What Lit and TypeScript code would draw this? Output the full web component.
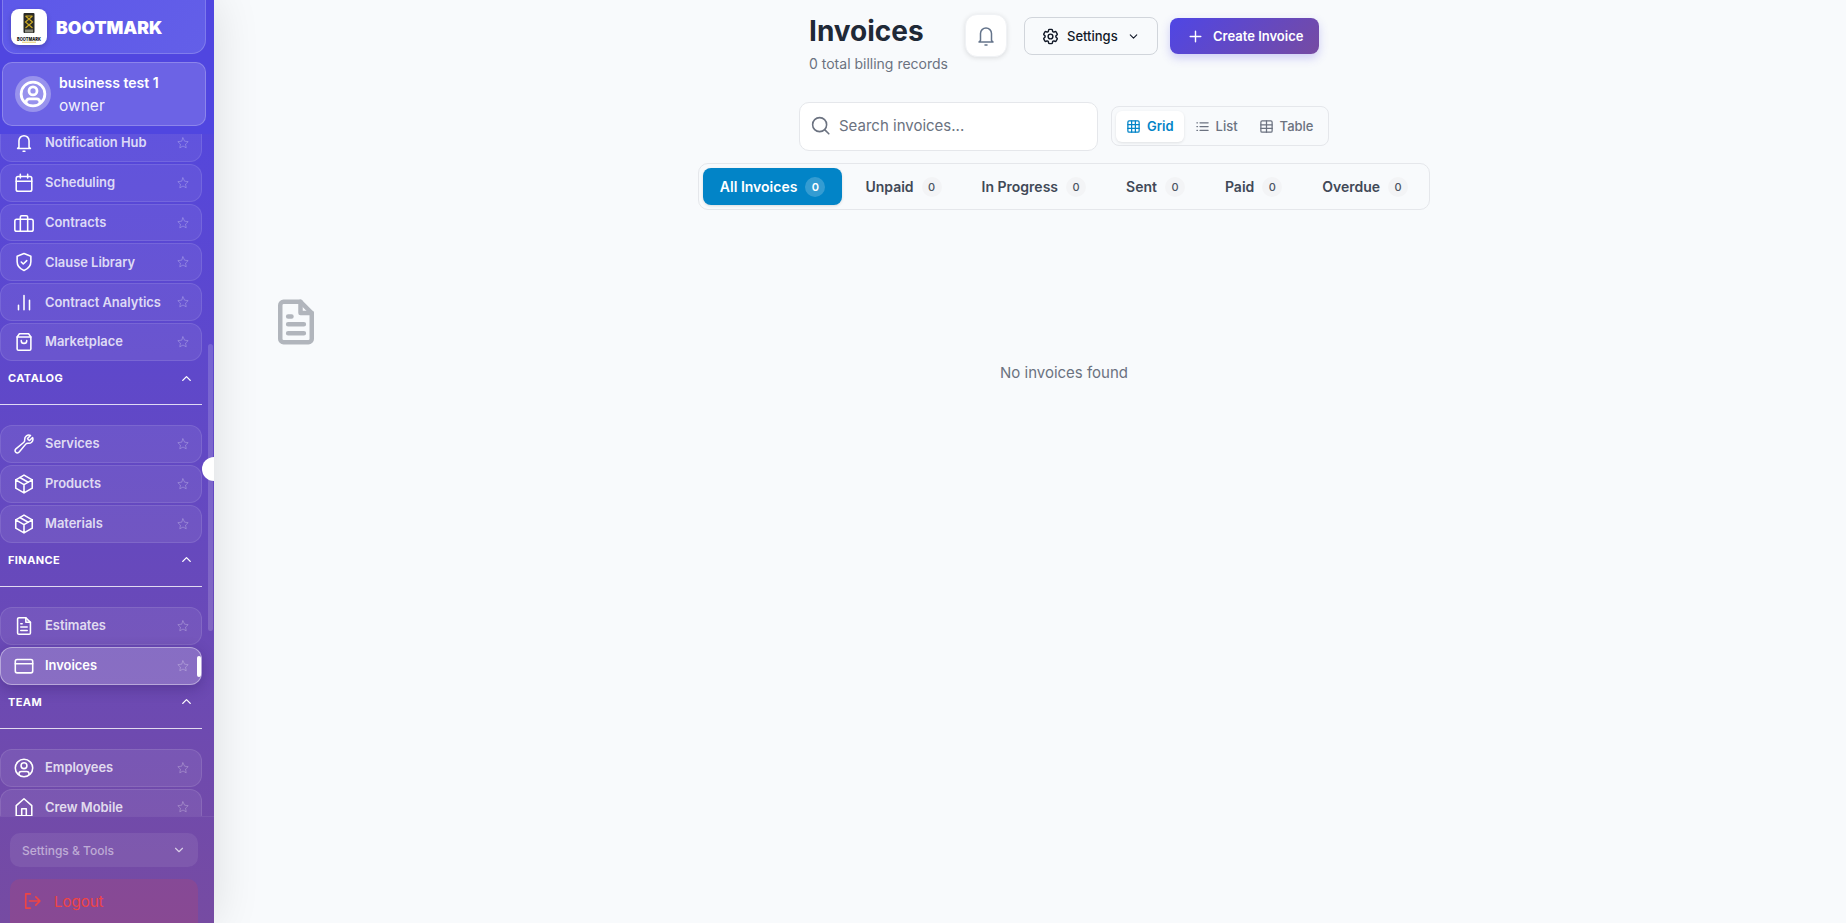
import { LitElement, html, css, svg } from 'lit';
import { customElement } from 'lit/decorators.js';
import { classMap } from 'lit/directives/class-map.js';

const icons: Record<string, unknown> = {
    bell: svg`<path d="M6.500 16.500V9.500a5.500 5.500 0 0 1 11 0v7l1.500 1.500H5z"/><path d="M11 21h2"/>`,
    calendar: svg`<rect x="3.500" y="5" width="17" height="16" rx="2"/><path d="M8 2.500v4M16 2.500v4M3.500 10h17"/>`,
    briefcase: svg`<rect x="2" y="8" width="20" height="13" rx="2"/><path d="M8 21V5.500A1.500 1.500 0 0 1 9.500 4h5A1.500 1.500 0 0 1 16 5.500V21"/>`,
    shield: svg`<path d="M12 2.800l7.500 2.900v5.800c0 4.600-3 8-7.500 9.700-4.500-1.700-7.500-5.100-7.500-9.700V5.700z"/><path d="M9 12l2.200 2.200L15 10.500"/>`,
    chart: svg`<path d="M6 20.500v-5M12 20.500V5M18 20.500V10"/>`,
    bag: svg`<path d="M7 3h10l2.500 3.500V19.500a1.500 1.500 0 0 1-1.500 1.500H6a1.500 1.500 0 0 1-1.500-1.500V6.500z"/><path d="M4.500 6.500h15M9 10.500a3 3 0 0 0 6 0"/>`,
    wrench: svg`<path d="M21.750 6.750a4.500 4.500 0 0 1-4.884 4.484c-1.076-.091-2.264.071-2.950.904l-7.152 8.684a2.548 2.548 0 1 1-3.586-3.586l8.684-7.152c.833-.686.995-1.874.904-2.950a4.500 4.500 0 0 1 6.336-4.486l-3.276 3.276a3.004 3.004 0 0 0 2.250 2.250l3.276-3.276c.201.422.398.896.398 1.856z"/>`,
    cube: svg`<path d="M21 7.500l-9-5.250L3 7.500m18 0l-9 5.250m9-5.250v9l-9 5.250M3 7.500l9 5.250M3 7.500v9l9 5.250m0-9v9"/><path d="M7.500 4.900l9 5.200"/>`,
    doc: svg`<path d="M14 3H6.500A1.500 1.500 0 0 0 5 4.500v15A1.500 1.500 0 0 0 6.500 21h11a1.500 1.500 0 0 0 1.500-1.500V8z"/><path d="M14 3v5h5M8.500 13h7M8.500 17h7M8.500 9.500H10"/>`,
    card: svg`<rect x="2.500" y="5" width="19" height="14.500" rx="2"/><path d="M2.500 9.500h19"/>`,
    user: svg`<circle cx="12" cy="12" r="9.500"/><circle cx="12" cy="9.500" r="3.200"/><path d="M6.500 19v-.7a2.500 2.500 0 0 1 2.500-2.500h6a2.500 2.500 0 0 1 2.500 2.500v.7"/>`,
    home: svg`<path d="M3.500 21.500V10.500L12 3l8.500 7.500v11z"/><path d="M9.500 21.500V14h5v7.500"/>`,
    chevUp: svg`<path d="M6 15l6-6 6 6"/>`,
    chevDown: svg`<path d="M6 9l6 6 6-6"/>`,
    star: svg`<path d="M12 3.200l2.700 5.700 6.200.8-4.500 4.300 1.100 6.200L12 17.200l-5.500 3 1.100-6.200-4.500-4.300 6.200-.8z"/>`,
    logout: svg`<path d="M10 3.500H4.500v17H10"/><path d="M9 12h12.500M16.500 7l5 5-5 5"/>`,
    gear: svg`<path d="M9.594 3.940c.09-.542.56-.94 1.110-.94h2.593c.55 0 1.020.398 1.110.94l.213 1.281c.063.374.313.686.645.870.074.040.147.083.22.127.325.196.72.257 1.075.124l1.217-.456a1.125 1.125 0 0 1 1.370.490l1.296 2.247a1.125 1.125 0 0 1-.26 1.431l-1.003.827c-.293.241-.438.613-.43.992a7.723 7.723 0 0 1 0 .255c-.008.378.137.75.43.991l1.004.827c.424.35.534.955.26 1.430l-1.298 2.247a1.125 1.125 0 0 1-1.369.491l-1.217-.456c-.355-.133-.75-.072-1.076.124a6.470 6.470 0 0 1-.22.128c-.331.183-.581.495-.644.869l-.213 1.281c-.09.543-.56.94-1.110.94h-2.594c-.55 0-1.019-.398-1.110-.94l-.213-1.281c-.062-.374-.312-.686-.644-.870a6.520 6.520 0 0 1-.22-.127c-.325-.196-.72-.257-1.076-.124l-1.217.456a1.125 1.125 0 0 1-1.369-.490l-1.297-2.247a1.125 1.125 0 0 1 .26-1.431l1.004-.827c.292-.24.437-.613.43-.991a6.932 6.932 0 0 1 0-.255c.007-.38-.138-.751-.43-.992l-1.004-.827a1.125 1.125 0 0 1-.26-1.430l1.297-2.247a1.125 1.125 0 0 1 1.370-.491l1.216.456c.356.133.751.072 1.076-.124.072-.044.146-.086.22-.128.332-.183.582-.495.644-.869l.214-1.280z"/><circle cx="12" cy="12" r="3"/>`,
    plus: svg`<path d="M12 4.500v15M4.500 12h15"/>`,
    search: svg`<circle cx="11" cy="11" r="8"/><path d="M17 17l4.500 4.500"/>`,
    grid: svg`<rect x="3" y="3" width="18" height="18" rx="2"/><path d="M3 9h18M3 15h18M9 3v18M15 3v18"/>`,
    list: svg`<path d="M8 6h13M8 12h13M8 18h13M3 6h1M3 12h1M3 18h1"/>`,
    table: svg`<rect x="3" y="3" width="18" height="18" rx="2"/><path d="M3 9.500h18M3 15h18M12 3v18"/>`,
};

const icon = (name: string, cls = '') =>
    html`<svg class="icon ${cls}" viewBox="0 0 24 24" fill="none" stroke="currentColor"
        stroke-width="2" stroke-linecap="round" stroke-linejoin="round">${icons[name]}</svg>`;

const sections = [
    { title: '', items: [
        ['Notification Hub', 'bell'], ['Scheduling', 'calendar'], ['Contracts', 'briefcase'],
        ['Clause Library', 'shield'], ['Contract Analytics', 'chart'], ['Marketplace', 'bag'],
    ] },
    { title: 'CATALOG', items: [['Services', 'wrench'], ['Products', 'cube'], ['Materials', 'cube']] },
    { title: 'FINANCE', items: [['Estimates', 'doc'], ['Invoices', 'card']] },
    { title: 'TEAM', items: [['Employees', 'user'], ['Crew Mobile', 'home']] },
];

const tabs = [
    ['All Invoices', 0], ['Unpaid', 0], ['In Progress', 0], ['Sent', 0], ['Paid', 0], ['Overdue', 0],
];

@customElement('app-root')
export class AppRoot extends LitElement {
    static styles = css`
        :host {
            display: flex;
            height: 923px;
            overflow: hidden;
            background: #f8fafc;
            font-family: Inter, 'Liberation Sans', sans-serif;
            color: #111827;
        }

        .icon { display: block; flex: none; }

        /* sidebar */
        .sidebar {
            position: relative;
            z-index: 1;
            flex: none;
            width: 214px;
            height: 923px;
            display: flex;
            flex-direction: column;
            background: linear-gradient(180deg, #4f46e5 0%, #764ba2 100%);
            box-shadow: 0 0 44px rgba(0, 0, 0, 0.12);
            color: #fff;
        }

        .side-head {
            flex: none;
            height: 134px;
            box-sizing: border-box;
            padding: 0 8px 0 2px;
            background: #5046e0;
            position: relative;
            z-index: 1;
        }

        .brand {
            height: 54px;
            box-sizing: border-box;
            display: flex;
            align-items: center;
            gap: 9px;
            padding-left: 8px;
            border: 1px solid rgba(255, 255, 255, 0.2);
            border-top: none;
            border-radius: 0 0 14px 14px;
            background: linear-gradient(135deg, #5d58e9, #635fe8);
        }

        .logo {
            width: 36px;
            height: 36px;
            border-radius: 8px;
            background: #fff;
            box-shadow: 0 2px 5px rgba(0, 0, 0, 0.2);
            flex: none;
        }

        .brand-name { margin-top: 1px; font-size: 17.600px; font-weight: 900; }

        .profile {
            margin-top: 8px;
            height: 64px;
            box-sizing: border-box;
            display: flex;
            align-items: center;
            gap: 8px;
            padding-left: 12px;
            border: 1px solid rgba(255, 255, 255, 0.22);
            border-radius: 10px;
            background: rgba(255, 255, 255, 0.16);
        }

        .avatar {
            width: 36px;
            height: 36px;
            border-radius: 50%;
            box-sizing: border-box;
            padding: 3px;
            background: rgba(255, 255, 255, 0.3);
            flex: none;
        }

        .avatar .icon { width: 30px; height: 30px; stroke-width: 2.200; }

        .profile-name { font-size: 14px; font-weight: 600; line-height: 22px; }
        .profile-role { font-size: 15.500px; font-weight: 400; line-height: 23px; color: rgba(255, 255, 255, 0.92); }

        .nav {
            position: relative;
            flex: 1;
            min-height: 0;
            overflow: hidden;
            padding-right: 12px;
        }

        .nav-list { margin-top: -10.200px; }

        .row {
            position: relative;
            height: 37.900px;
            box-sizing: border-box;
            margin-bottom: 2px;
            display: flex;
            align-items: center;
            padding-left: 12px;
            border: 1px solid rgba(255, 255, 255, 0.1);
            border-radius: 12px;
            background: rgba(255, 255, 255, 0.075);
            color: rgba(255, 255, 255, 0.8);
            font-size: 12.900px;
            font-weight: 600;
        }

        .row > .icon:first-child { width: 22px; height: 22px; color: #fff; stroke-width: 1.700; }
        .row-label { margin-left: 10px; flex: 1; position: relative; top: -0.300px; }
        .row .star { width: 14px; height: 14px; margin-right: 11px; stroke-width: 1.500; color: rgba(255, 255, 255, 0.28); }

        .row.active {
            background: rgba(255, 255, 255, 0.2);
            border-color: rgba(255, 255, 255, 0.4);
            box-shadow: 0 4px 14px rgba(40, 20, 90, 0.3);
            color: #fff;
        }

        .marker {
            position: absolute;
            right: 0;
            top: 8px;
            width: 4px;
            height: 21px;
            border-radius: 2px;
            background: #fff;
        }

        .section-head {
            height: 30px;
            display: flex;
            align-items: center;
            justify-content: space-between;
            padding: 0 8px 0 8px;
            font-size: 11px;
            font-weight: 700;
            letter-spacing: 0.4px;
        }

        .section-head .icon { width: 15px; height: 15px; stroke-width: 2.200; }

        .section-line {
            margin: 11px 0 20px;
            height: 1px;
            background: rgba(255, 255, 255, 0.8);
        }

        .thumb {
            position: absolute;
            right: 1px;
            top: 210px;
            width: 5px;
            height: 287px;
            border-radius: 3px;
            background: rgba(255, 255, 255, 0.16);
        }

        .knob {
            position: absolute;
            left: 202px;
            top: 457px;
            width: 12px;
            height: 24px;
            border-radius: 12px 0 0 12px;
            background: #fff;
            z-index: 2;
        }

        .side-foot {
            flex: none;
            height: 107px;
            box-sizing: border-box;
            padding: 16px 16px 0 10px;
            border-top: 1px solid rgba(255, 255, 255, 0.07);
        }

        .tools {
            height: 34px;
            display: flex;
            align-items: center;
            justify-content: space-between;
            padding: 0 12px;
            border-radius: 10px;
            background: rgba(255, 255, 255, 0.08);
            color: rgba(255, 255, 255, 0.5);
            font-size: 12px;
            font-weight: 500;
        }

        .tools .icon { width: 14px; height: 14px; color: rgba(255, 255, 255, 0.7); }

        .logout {
            margin-top: 12px;
            height: 44px;
            display: flex;
            align-items: center;
            gap: 12px;
            padding-left: 12px;
            border-radius: 10px 10px 0 0;
            background: rgba(239, 68, 68, 0.15);
            color: #ef4444;
            font-size: 15px;
        }

        .logout .icon { width: 20px; height: 20px; }

        /* main */
        .main {
            flex: 1;
            min-width: 0;
            box-sizing: border-box;
            padding: 14px 0 0 68px;
            display: flex;
            flex-direction: column;
            align-items: center;
        }

        .page-head { display: flex; align-items: flex-start; height: 60px; }
        .titles { margin-right: 17px; }
        .title { font-size: 28px; font-weight: 700; line-height: 34px; color: #1f2937; }
        .subtitle { margin-top: 6px; font-size: 14px; line-height: 20px; color: #6b7280; }

        .bell {
            width: 42px;
            height: 43px;
            box-sizing: border-box;
            display: flex;
            align-items: center;
            justify-content: center;
            border: 1px solid #f0f2f5;
            border-radius: 12px;
            background: #fff;
            box-shadow: 0 1px 5px rgba(0, 0, 0, 0.12);
            color: #64748b;
            margin-right: 17px;
        }

        .bell .icon { width: 24px; height: 24px; stroke-width: 1.500; }

        .settings {
            margin-top: 3px;
            margin-right: 12px;
            width: 134px;
            height: 38px;
            box-sizing: border-box;
            display: flex;
            align-items: center;
            padding-left: 16px;
            border: 1px solid #d1d5db;
            border-radius: 8px;
            font-size: 13px;
            font-weight: 500;
            color: #111827;
        }

        .settings .gear { width: 19px; height: 19px; stroke-width: 1.800; }
        .settings .chev { width: 13px; height: 13px; margin-left: 9px; }
        .settings span { margin-left: 7px; }

        .create {
            margin-top: 4px;
            width: 149px;
            height: 36px;
            box-sizing: border-box;
            display: flex;
            align-items: center;
            gap: 9px;
            padding-left: 17px;
            border-radius: 8px;
            background: linear-gradient(135deg, #4f46e5, #764ba2);
            box-shadow: 0 4px 10px rgba(79, 70, 229, 0.25);
            color: #fff;
            font-size: 13px;
            font-weight: 600;
        }

        .create .icon { width: 17px; height: 17px; }

        .filters { margin-top: 28px; display: flex; align-items: flex-start; gap: 13px; }

        .search {
            width: 299px;
            height: 49px;
            box-sizing: border-box;
            display: flex;
            align-items: center;
            gap: 8px;
            padding: 0 0 2px 10px;
            border: 1px solid #e5e7eb;
            border-radius: 10px;
            background: #fff;
            color: #6b7280;
            font-size: 15px;
        }

        .search .icon { width: 21px; height: 21px; stroke-width: 1.800; }

        .views {
            margin-top: 4px;
            width: 218px;
            height: 40px;
            box-sizing: border-box;
            display: flex;
            align-items: center;
            gap: 1px;
            padding: 0 4px;
            border: 1px solid #e5e7eb;
            border-radius: 8px;
        }

        .view {
            height: 31px;
            display: flex;
            align-items: center;
            gap: 6px;
            padding: 0 10px;
            border-radius: 6px;
            font-size: 13px;
            font-weight: 500;
            color: #6b7280;
        }

        .view .icon { width: 15px; height: 15px; stroke-width: 2; }

        .view.on {
            background: #fff;
            box-shadow: 0 1px 3px rgba(0, 0, 0, 0.1);
            color: #0284c7;
            font-weight: 600;
        }

        .tabs {
            margin-top: 12px;
            height: 47px;
            box-sizing: border-box;
            display: flex;
            align-items: center;
            gap: 8px;
            padding: 0 5px;
            border: 1px solid #e5e7eb;
            border-radius: 10px;
        }

        .tab {
            height: 37px;
            display: flex;
            align-items: center;
            gap: 8px;
            padding: 0 16px;
            border-radius: 8px;
            font-size: 14px;
            font-weight: 600;
            color: #414957;
        }

        .tab.on {
            margin: 0 -1px;
            padding: 0 17px;
            background: #0284c7;
            box-shadow: 0 1px 3px rgba(0, 0, 0, 0.12);
            color: #fff;
        }

        .count {
            width: 20px;
            height: 20px;
            border-radius: 50%;
            display: flex;
            align-items: center;
            justify-content: center;
            background: #f3f4f6;
            font-size: 11px;
            font-weight: 500;
            color: #4b5563;
        }

        .tab.on .count { background: rgba(255, 255, 255, 0.2); color: #fff; font-weight: 600; }

        .empty {
            align-self: stretch;
            margin-top: 85px;
            display: flex;
            flex-direction: column;
            align-items: center;
        }

        .empty .icon {
            align-self: flex-start;
            margin-left: -13px;
            width: 54px;
            height: 54px;
            color: #b1b5bc;
        }

        .empty-text { margin-top: 14px; font-size: 15px; line-height: 20px; color: #6b7280; }
    `;

    private renderLogo() {
        return html`<svg class="logo" viewBox="0 0 36 36">
            <rect x="12.500" y="4" width="11" height="20" rx="1" fill="#2b2b26"/>
            <path d="M14.500 7l7 6-7 6M21.500 7l-7 6 7 6M14.500 7h7" stroke="#c9a825" stroke-width="1.200" fill="none"/>
            <rect x="14" y="20.500" width="8" height="3" fill="#8a8a80"/>
            <text x="18" y="31.500" text-anchor="middle" font-size="5" font-weight="800" fill="#111"
                textLength="24" lengthAdjust="spacingAndGlyphs">BOOTMARK</text>
            <rect x="11" y="32.800" width="14" height="0.700" fill="#d8b52a"/>
        </svg>`;
    }

    private renderSidebar() {
        return html`<aside class="sidebar">
            <div class="side-head">
                <div class="brand">
                    ${this.renderLogo()}
                    <span class="brand-name">BOOTMARK</span>
                </div>
                <div class="profile">
                    <div class="avatar">${icon('user')}</div>
                    <div>
                        <div class="profile-name">business test 1</div>
                        <div class="profile-role">owner</div>
                    </div>
                </div>
            </div>
            <nav class="nav">
                <div class="nav-list">
                    ${sections.map(section => html`
                        ${section.title ? html`
                            <div class="section-head">
                                <span>${section.title}</span>
                                ${icon('chevUp')}
                            </div>
                            <div class="section-line"></div>
                        ` : ''}
                        ${section.items.map(([label, name]) => html`
                            <div class=${classMap({ row: true, active: label === 'Invoices' })}>
                                ${icon(name)}
                                <span class="row-label">${label}</span>
                                ${icon('star', 'star')}
                                ${label === 'Invoices' ? html`<i class="marker"></i>` : ''}
                            </div>
                        `)}
                    `)}
                </div>
                <div class="thumb"></div>
            </nav>
            <div class="side-foot">
                <div class="tools"><span>Settings &amp; Tools</span>${icon('chevDown')}</div>
                <div class="logout">${icon('logout')}<span>Logout</span></div>
            </div>
            <div class="knob"></div>
        </aside>`;
    }

    render() {
        return html`
            ${this.renderSidebar()}
            <main class="main">
                <header class="page-head">
                    <div class="titles">
                        <div class="title">Invoices</div>
                        <div class="subtitle">0 total billing records</div>
                    </div>
                    <div class="bell">${icon('bell')}</div>
                    <div class="settings">
                        ${icon('gear', 'gear')}
                        <span>Settings</span>
                        ${icon('chevDown', 'chev')}
                    </div>
                    <div class="create">${icon('plus')}Create Invoice</div>
                </header>
                <div class="filters">
                    <div class="search">${icon('search')}<span>Search invoices...</span></div>
                    <div class="views">
                        <div class="view on">${icon('grid')}Grid</div>
                        <div class="view">${icon('list')}List</div>
                        <div class="view">${icon('table')}Table</div>
                    </div>
                </div>
                <div class="tabs">
                    ${tabs.map(([label, count], i) => html`
                        <div class=${classMap({ tab: true, on: i === 0 })}>
                            ${label}<span class="count">${count}</span>
                        </div>
                    `)}
                </div>
                <div class="empty">
                    ${icon('doc')}
                    <div class="empty-text">No invoices found</div>
                </div>
            </main>
        `;
    }
}
